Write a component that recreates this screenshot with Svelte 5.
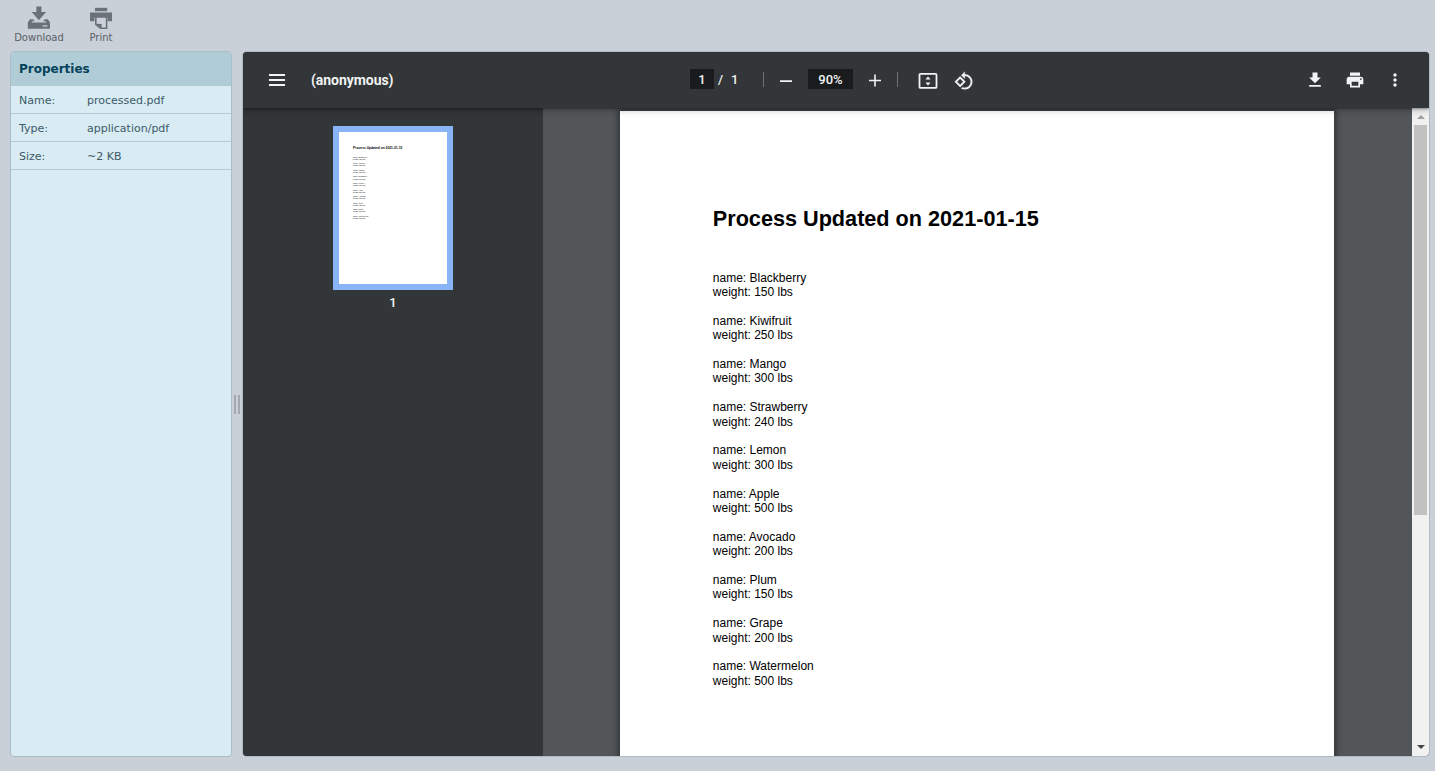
<script>
  const properties = [
    ['Name:', 'processed.pdf'],
    ['Type:', 'application/pdf'],
    ['Size:', '~2 KB']
  ];
  const items = [
    ['Blackberry', 150],
    ['Kiwifruit', 250],
    ['Mango', 300],
    ['Strawberry', 240],
    ['Lemon', 300],
    ['Apple', 500],
    ['Avocado', 200],
    ['Plum', 150],
    ['Grape', 200],
    ['Watermelon', 500]
  ];
</script>

{#snippet sheet()}
  <article class="sheet">
    <h1><span>Process Updated on 2021-01-15</span></h1>
    {#each items as [name, weight]}
      <p><span>name: {name}</span><br /><span>weight: {weight} lbs</span></p>
    {/each}
  </article>
{/snippet}

<div class="app">
  <header class="actions">
    <button class="action download">
      <svg width="24" height="24" viewBox="0 0 24 24" fill="#697179">
        <path d="M9.4.4h5V6h4.7l-7.2 8.2L4.7 6h4.7z" />
        <path fill-rule="evenodd" d="M.8 16.4L3 13.2h3l1.8 2H5.2l-.7 1.2h14.8l-.7-1.2H16l1.8-2h3l2.2 3.2v6.4H.8zM15.6 19.2v1.3h4.8v-1.3z" />
      </svg>
      <span>Download</span>
    </button>
    <button class="action print">
      <svg width="24" height="24" viewBox="0 0 24 24" fill="#697179">
        <path d="M6 1.8h12.2v3.4H6z" />
        <path d="M1 6.6h22v8.6h-4.4v-3.8H5.4v3.8H1z" />
        <path d="M6 11h12.4v12h-7.2L6 18.8z" />
        <path fill="#cbd0d9" d="M7.6 11.8h9.2v9.6h-4.3l.3-3.4-5.2-.2z" />
      </svg>
      <span>Print</span>
    </button>
  </header>

  <main>
    <aside class="panel">
      <h2>Properties</h2>
      {#each properties as [label, value]}
        <div class="property"><span>{label}</span><span>{value}</span></div>
      {/each}
    </aside>

    <div class="splitter"><i></i><i></i></div>

    <section class="viewer">
      <div class="bar">
        <div class="left">
          <svg width="24" height="24" viewBox="0 0 24 24" fill="#f1f3f4"><path d="M4 6h16v2H4zm0 5h16v2H4zm0 5h16v2H4z" /></svg>
          <strong>(anonymous)</strong>
        </div>
        <div class="center">
          <span class="field page-number">1</span>
          <span class="slash">/</span>
          <span class="total">1</span>
          <i class="divider"></i>
          <svg class="minus" width="20" height="20" viewBox="0 0 20 20" fill="#f1f3f4"><path d="M4 9.2h12v1.8H4z" /></svg>
          <span class="field zoom">90%</span>
          <svg class="plus" width="20" height="20" viewBox="0 0 20 20" fill="#f1f3f4"><path d="M9.2 4.5h1.6v5.2H16v1.6h-5.2v5.2H9.2v-5.2H4V9.7h5.2z" /></svg>
          <i class="divider second"></i>
          <svg class="fit" width="20" height="20" viewBox="0 0 20 20">
            <rect x="1.5" y="2.9" width="17" height="14" rx="1" fill="none" stroke="#f1f3f4" stroke-width="1.8" />
            <path fill="#f1f3f4" d="M10 5.4l2.6 3H7.4zM7.4 11.6h5.2l-2.6 3z" />
          </svg>
          <svg class="rotate" width="20" height="20" viewBox="0 0 24 24" fill="#f1f3f4" stroke="#f1f3f4" stroke-width=".3">
            <path d="M7.34 6.41L.86 12.9l6.49 6.48 6.49-6.48-6.5-6.49zM3.69 12.9l3.66-3.66L11 12.9l-3.66 3.66-3.65-3.66zm15.67-6.26C17.61 4.88 15.3 4 13 4V.76L8.76 5 13 9.24V6c1.79 0 3.58.68 4.95 2.05 2.73 2.73 2.73 7.17 0 9.9C16.58 19.32 14.79 20 13 20c-.97 0-1.94-.21-2.84-.61l-1.49 1.49C10.02 21.62 11.51 22 13 22c2.3 0 4.61-.88 6.36-2.64 3.52-3.51 3.52-9.21 0-12.72z" />
          </svg>
        </div>
        <div class="right">
          <svg width="20" height="20" viewBox="0 0 24 24" fill="#f1f3f4"><path d="M19 9h-4V3H9v6H5l7 7 7-7zM5 18v2h14v-2H5z" /></svg>
          <svg width="20" height="20" viewBox="0 0 24 24" fill="#f1f3f4"><path d="M19 8H5c-1.66 0-3 1.34-3 3v6h4v4h12v-4h4v-6c0-1.66-1.34-3-3-3zm-3 11H8v-5h8v5zm3-7c-.55 0-1-.45-1-1s.45-1 1-1 1 .45 1 1-.45 1-1 1zm-1-9H6v4h12V3z" /></svg>
          <svg width="20" height="20" viewBox="0 0 24 24" fill="#f1f3f4"><path d="M12 8c1.1 0 2-.9 2-2s-.9-2-2-2-2 .9-2 2 .9 2 2 2zm0 2c-1.1 0-2 .9-2 2s.9 2 2 2 2-.9 2-2-.9-2-2-2zm0 6c-1.1 0-2 .9-2 2s.9 2 2 2 2-.9 2-2-.9-2-2-2z" /></svg>
        </div>
      </div>
      <div class="body">
        <nav class="thumbs">
          <div class="thumb"><div class="mini">{@render sheet()}</div></div>
          <span>1</span>
        </nav>
        <div class="canvas">{@render sheet()}</div>
        <div class="scrollbar">
          <svg width="15" height="17" viewBox="0 0 15 17"><path fill="#a0a0a0" d="M4 11h8L8 7z" /></svg>
          <div class="handle"></div>
          <svg class="down" width="15" height="17" viewBox="0 0 15 17"><path fill="#454545" d="M4 6h8l-4 4z" /></svg>
        </div>
      </div>
    </section>
  </main>
</div>

<style>
  :global(body) { margin: 0; background: #c9d0d8; }
  .app { box-sizing: border-box; width: 1435px; height: 771px; overflow: hidden; display: flex; flex-direction: column; background: #c9d0d8; font-family: "DejaVu Sans", Verdana, sans-serif; }
  .app svg { display: block; flex: none; }
  .actions { height: 51px; flex: none; display: flex; padding-left: 10px; box-sizing: border-box; }
  .action { border: 0; background: none; padding: 6px 0 0; margin: 0; display: flex; flex-direction: column; align-items: center; font: 10px/14px "DejaVu Sans", Verdana, sans-serif; color: #5a6067; }
  .action span { margin-top: 1px; }
  .download { width: 58px; }
  .print { width: 66px; }
  main { display: flex; height: 706px; padding-left: 10px; }
  .panel { box-sizing: border-box; width: 222px; height: 706px; border: 1px solid #a9bec9; border-radius: 4px; background: #d9ebf3; overflow: hidden; font-size: 11px; color: #3c5a68; }
  h2 { margin: 0; height: 34px; box-sizing: border-box; border-bottom: 1px solid #a9cbd6; padding-left: 8px; font-size: 12px; line-height: 35px; color: #04425a; background: #b0ccd7; }
  .property { height: 28px; box-sizing: border-box; border-bottom: 1px solid #b0ccd7; padding-left: 8px; display: flex; line-height: 29px; }
  .property span:first-child { width: 68px; }
  .splitter { width: 9px; padding-right: 2px; display: flex; justify-content: center; gap: 2px; align-items: center; }
  .splitter i { width: 2px; height: 19px; background: #a4a8ad; }
  .viewer { width: 1186px; height: 704px; margin-top: 1px; box-sizing: border-box; border-radius: 4px; overflow: hidden; background: #323639; display: flex; flex-direction: column; box-shadow: 0 0 0 1px #afbac4; font-family: Roboto, sans-serif; color: #f1f3f4; }
  .bar { height: 56px; flex: none; display: flex; align-items: center; background: #323639; box-shadow: 0 -2px 8px rgba(0,0,0,.09), 0 4px 8px rgba(0,0,0,.06), 0 1px 2px rgba(0,0,0,.3), 0 2px 6px rgba(0,0,0,.15); z-index: 1; position: relative; font-weight: 500; font-size: 13px; }
  .left { display: flex; align-items: center; gap: 22px; padding-left: 22px; width: 425px; }
  .left strong { font-size: 14px; font-weight: 700; line-height: 20px; letter-spacing: -.05px; }
  .center { display: flex; align-items: center; width: 600px; margin-top: -2px; }
  .field { background: #191b1d; height: 20px; line-height: 21px; text-align: center; }
  .page-number { width: 24px; }
  .slash { margin-left: 4px; width: 5px; }
  .total { margin-left: 8px; width: 8px; }
  .divider { width: 1px; height: 15px; background: #6e7275; margin-left: 24px; }
  .minus { margin-left: 12px; margin-top: 3px; }
  .zoom { width: 45px; margin-left: 12px; }
  .plus { margin-left: 12px; margin-top: 2px; }
  .divider.second { margin-left: 12px; }
  .fit { margin-left: 20px; margin-top: 3px; }
  .rotate { margin-left: 16px; margin-top: 3px; }
  .right { display: flex; gap: 20px; margin-left: 15px; }
  .body { flex: 1; min-height: 0; display: flex; }
  .thumbs { width: 300px; flex: none; background: #323639; display: flex; flex-direction: column; align-items: center; padding-top: 18px; box-sizing: border-box; font-size: 13px; font-weight: 500; line-height: 16px; gap: 5px; }
  .thumb { width: 108px; height: 152px; border: 6px solid #8ab4f8; background: #fff; overflow: hidden; }
  .mini { width: 714px; height: 1010px; transform: scale(.15126); transform-origin: 0 0; }
  .canvas { width: 869px; flex: none; background: #525659; padding: 3px 0 0 77px; box-sizing: border-box; overflow: hidden; }
  .sheet { width: 714px; height: 1010px; box-sizing: border-box; padding: 91.7px 0 0 92.8px; background: #fff; color: #000; font: 12px/14.4px "Liberation Sans", Arial, sans-serif; }
  .canvas .sheet { box-shadow: 0 0 6px 2px rgba(0,0,0,.4); }
  .sheet h1 { margin: 0; height: 67.9px; font-size: 21.65px; line-height: 32px; }
  .sheet p { margin: 0 0 14.4px; }
  .scrollbar { width: 17px; flex: none; background: #f1f1f1; display: flex; flex-direction: column; align-items: center; }
  .handle { width: 13px; height: 390px; background: #c1c1c1; }
  .down { margin-top: auto; }
</style>
